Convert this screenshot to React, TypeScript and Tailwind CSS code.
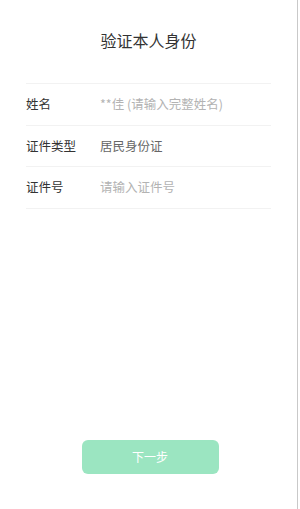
const font = { fontFamily: '"Noto Sans CJK SC", "Noto Sans", sans-serif' }

const rows = [
  { label: '姓名', value: '**佳 (请输入完整姓名)', placeholder: true },
  { label: '证件类型', value: '居民身份证', placeholder: false },
  { label: '证件号', value: '请输入证件号', placeholder: true },
]

export default function App() {
  return (
    <div className="flex h-[509px] w-[300px] bg-white" style={font}>
      <div className="flex h-full w-[298px] flex-col border-r border-[#c9c9c9]">
        {/* Header */}
        <div className="flex h-[83px] justify-center pt-[29px]">
          <h1 className="text-[16px] leading-[22px] text-[#333]">验证本人身份</h1>
        </div>

        {/* Form rows */}
        <div className="mx-[26px] border-t border-[#f2f2f2]">
          {rows.map((row) => (
            <div
              key={row.label}
              className="flex h-[41.7px] items-center border-b border-[#f2f2f2] text-[12.5px]"
            >
              <span className="w-[74px] text-[#333]">{row.label}</span>
              <span className={row.placeholder ? 'text-[#b3b3b3]' : 'text-[#666]'}>{row.value}</span>
            </div>
          ))}
        </div>

        <div className="flex-1" />

        {/* Next button */}
        <div className="flex justify-center pb-[35px] pl-[3px]">
          <button className="h-[34px] w-[137px] rounded-[6px] bg-[#9be5c1] text-[12px] text-white">
            下一步
          </button>
        </div>
      </div>
    </div>
  )
}
